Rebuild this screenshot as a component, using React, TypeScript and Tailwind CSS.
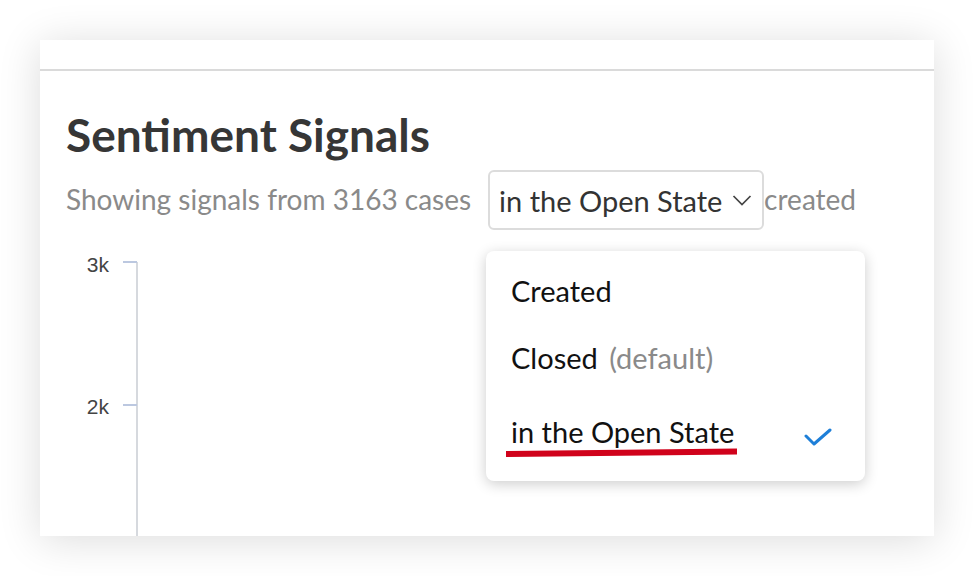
import React from "react"

// Dropdown option row
const Option = ({ children, className = "" }: { children: React.ReactNode; className?: string }) => (
  <div className={`flex items-center justify-between pl-[25px] pr-[33px] text-[29px] text-[#111] leading-none ${className}`}>
    {children}
  </div>
)

export default function App() {
  return (
    <div className="w-[974px] h-[576px] bg-white p-[40px] overflow-hidden" style={{ fontFamily: "Lato, 'Open Sans', sans-serif" }}>
      <div className="relative w-[894px] h-[496px] bg-white shadow-[0_4px_40px_rgba(0,0,0,0.14)]">
        {/* header strip */}
        <div className="h-[31px] border-b-2 border-[#dadada]" />

        <div className="pl-[26px]">
          <h1 className="mt-[41px] text-[46px] font-bold leading-none text-[#363636]">Sentiment Signals</h1>

          <div className="mt-[12px] flex items-center text-[28px] leading-none">
            <span className="-translate-y-[1px] text-[#8a8a8a]">Showing signals from 3163 cases</span>
            <div className="ml-[17px] flex h-[60px] w-[276px] items-center gap-[10px] rounded-[6px] border-2 border-[#dcdcdc] pl-[9px] text-[29px] text-[#333]">
              <span>in the Open State</span>
              <svg width="20" height="18" viewBox="0 0 20 18" fill="none" stroke="#444" strokeWidth="1.7">
                <path d="M1.5 5l8.5 8.5L18.5 5" />
              </svg>
            </div>
            <span className="-translate-y-[1px] text-[#8a8a8a]">created</span>
          </div>

          {/* chart axis */}
          <svg width="200" height="306" className="-ml-[26px]" style={{ fontFamily: "'Liberation Sans', Arial, sans-serif" }}>
            <line x1="97" y1="32" x2="97" y2="306" stroke="#d6d9de" strokeWidth="2" />
            <line x1="83" y1="32" x2="97" y2="32" stroke="#bcc8e0" strokeWidth="2" />
            <line x1="83" y1="175" x2="97" y2="175" stroke="#bcc8e0" strokeWidth="2" />
            <text x="69" y="42" textAnchor="end" fontSize="21" fill="#444">3k</text>
            <text x="69" y="184" textAnchor="end" fontSize="21" fill="#444">2k</text>
          </svg>
        </div>

        {/* open dropdown menu */}
        <div className="absolute left-[446px] top-[211px] w-[379px] h-[230px] rounded-[8px] bg-white shadow-[0_3px_14px_rgba(0,0,0,0.2)]">
          <Option className="mt-[25px]">Created</Option>
          <Option className="mt-[38px]">
            <span>
              Closed <span className="ml-[4px] text-[#8a8a8a]">(default)</span>
            </span>
          </Option>
          <Option className="mt-[45px]">
            <span>in the Open State</span>
            <svg width="28" height="20" viewBox="0 0 28 20" fill="none" stroke="#1e7fd8" strokeWidth="3" strokeLinecap="round" strokeLinejoin="round" className="translate-y-[5px]">
              <path d="M2 9l8 8 16-14" />
            </svg>
          </Option>
          {/* red marker underline */}
          <svg width="240" height="20" className="absolute left-[18px] top-[190px]">
            <path d="M2 10 L233 7.5 L233 13.5 L2 16 Z" fill="#d0021b" />
          </svg>
        </div>
      </div>
    </div>
  )
}
